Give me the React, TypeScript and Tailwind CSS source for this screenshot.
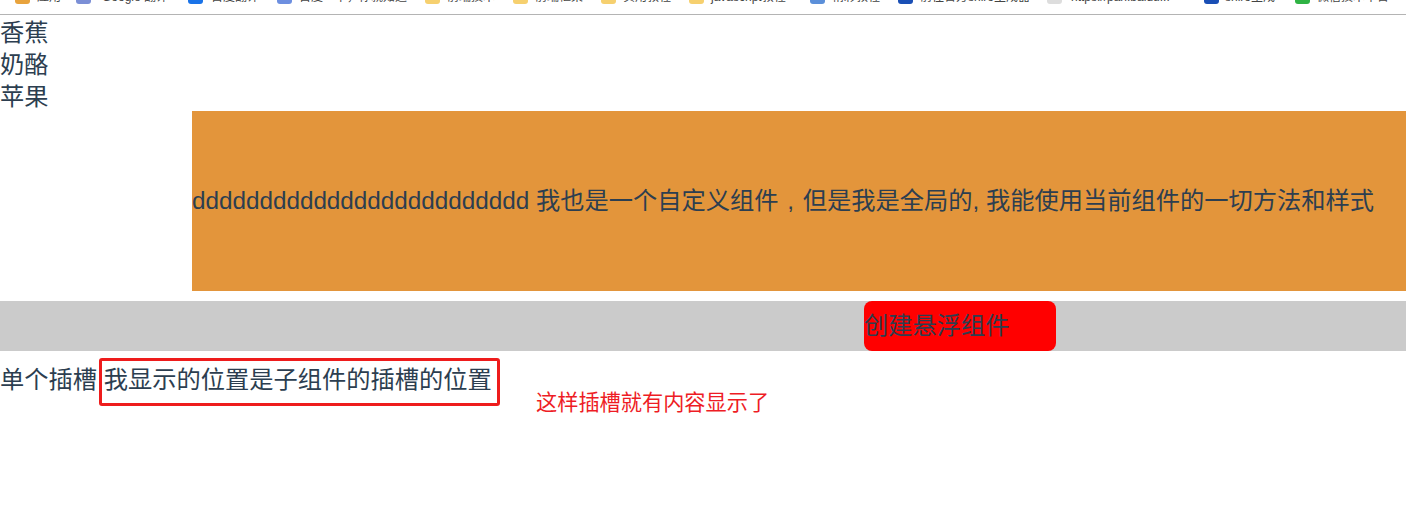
const bookmarks = [
  { label: '应用', w: 61, gap: 7, color: '#e8a33d' },
  { label: 'Google 翻译', w: 112, gap: 11, color: '#7b8fd6' },
  { label: '百度翻译', w: 89, gap: 8, color: '#1a73e8' },
  { label: '百度一下，你就知道', w: 148, gap: 7, color: '#6d8fe0' },
  { label: '前端技术', w: 88, gap: 7, color: '#f6d06f' },
  { label: '前端框架', w: 88, gap: 7, color: '#f6d06f' },
  { label: '实用教程', w: 88, gap: 7, color: '#f6d06f' },
  { label: 'javascript教程', w: 121, gap: 7, color: '#f6d06f' },
  { label: '精彩教程', w: 88, gap: 7, color: '#5b8fd9' },
  { label: '前往官方shiro生成器', w: 149, gap: 7, color: '#1a4fb5' },
  { label: 'https://pan.baidu...', w: 157, gap: 9, color: '#dddddd' },
  { label: 'shiro生成', w: 91, gap: 6, color: '#1a4fb5' },
  { label: '微信技术平台', w: 96, gap: 7, color: '#2fb344' },
]

const font = "font-['Liberation_Sans','Noto_Sans_CJK_SC',sans-serif]"

export default function App() {
  return (
    <div className={`relative h-[512px] w-[1406px] overflow-hidden bg-white text-[24.25px] leading-[32px] text-[#2c3e50] ${font}`}>
      <div className="flex h-[15px] items-end overflow-hidden border-b border-[#b4b4b4] pb-[9px] pl-[15px] text-[12px] leading-[16px] text-[#444]">
        {bookmarks.map((b) => (
          <div key={b.label} className="flex shrink-0 items-center whitespace-nowrap" style={{ width: b.w, gap: b.gap }}>
            <span className="h-[14px] w-[15px] shrink-0 rounded-[3px]" style={{ background: b.color }} />
            <span>{b.label}</span>
          </div>
        ))}
      </div>

      <div className="h-[96px] pt-[2px]">
        <div>香蕉</div>
        <div>奶酪</div>
        <div>苹果</div>
      </div>

      <div className="ml-[192px] flex h-[180px] items-center bg-[#e3953b]">
        <span>
          ddddddddddddddddddddddddd 我也是一个自定义组件<span className="inline-block w-[1em] text-center">,</span>但是我是全局的, 我能使用当前组件的一切方法和样式
        </span>
      </div>

      <div className="mt-[10px] h-[50px] bg-[#cbcbcb] pl-[864px]">
        <button className="block h-[50px] w-[192px] rounded-[8px] bg-[#ff0000] text-left leading-[50px]">创建悬浮组件</button>
      </div>

      <div className="mt-[13px]">单个插槽 我显示的位置是子组件的插槽的位置</div>

      {/* red annotations drawn on top of the screenshot */}
      <div className="absolute top-[358px] left-[99px] h-[48px] w-[401px] rounded-[3px] border-[3px] border-[#ee1c1c]" />
      <div className="absolute top-[389px] left-[536px] text-[21.2px] leading-[28px] text-[#ee1c25]">这样插槽就有内容显示了</div>
    </div>
  )
}
